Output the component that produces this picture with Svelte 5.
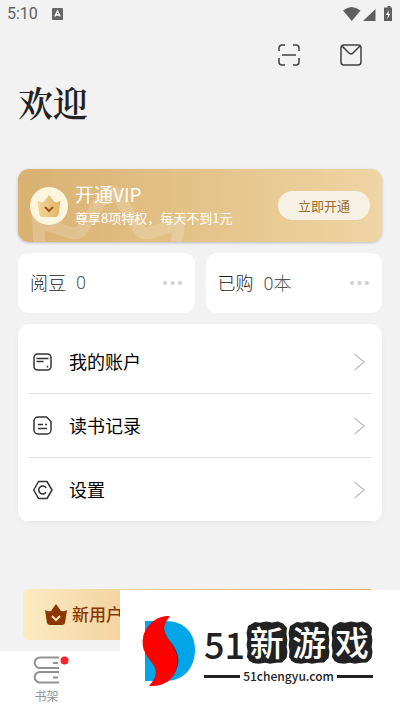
<script lang="ts">
	const stats = [
		{ label: '阅豆', value: '0' },
		{ label: '已购', value: '0本' }
	];

	const menu = [
		{ id: 'account', label: '我的账户' },
		{ id: 'history', label: '读书记录' },
		{ id: 'settings', label: '设置' }
	];
</script>

<div class="screen">
	<div class="status">
		<span class="time">5:10</span>
		<svg class="notice" width="11" height="12" viewBox="0 0 11 12">
			<rect width="11" height="12" rx="1" fill="#666" />
			<path d="M2.8 8.5 5.5 3l2.7 5.5M4 7h3" fill="none" stroke="#fff" stroke-width="1.4" />
		</svg>
		<svg class="signals" width="50" height="16" viewBox="0 0 50 16">
			<path d="M0 4.5Q8.500-2.500 17.500 4.500L8.800 15Z" fill="#5f5f5f" />
			<path d="M32.500 3v12H20Z" fill="#5f5f5f" />
			<path d="M43 1.500h1.500V0h3v1.500H49V15h-8V1.500Z" fill="#5f5f5f" />
			<path d="m46 4-3 5h2l-.7 4 3-5.200h-2Z" fill="#fff" />
		</svg>
	</div>

	<header>
		<div class="actions">
			<button aria-label="扫一扫">
				<svg width="22" height="22" viewBox="0 0 22 22" class="line">
					<path d="M1 7V4a3 3 0 0 1 3-3h3M15 1h3a3 3 0 0 1 3 3v3M21 14v4a3 3 0 0 1-3 3h-3M7 21H4a3 3 0 0 1-3-3v-4M4 11h14" />
				</svg>
			</button>
			<button aria-label="消息">
				<svg width="22" height="22" viewBox="0 0 22 22" class="line">
					<rect x="1" y="1" width="20" height="20" rx="3" />
					<path d="m2 2 7 7q2 2 4 0l7-7" />
				</svg>
			</button>
		</div>
		<h1>欢迎</h1>
	</header>

	<main>
		<section class="vip">
			<svg class="vip-bg" width="200" height="74" viewBox="0 0 200 74">
				<path d="M22 82 20 53l33 11q8 2 12-5l21-32q8-9 14 0l20 32q4 7 12 5l29-10-3 28" />
			</svg>
			<svg class="medal" width="38" height="38" viewBox="0 0 38 38">
				<defs>
					<linearGradient id="crown" x1="0" x2="1">
						<stop offset="0" stop-color="#f3d594" />
						<stop offset="1" stop-color="#e2b469" />
					</linearGradient>
				</defs>
				<circle cx="19" cy="19" r="19" fill="#fdf5de" />
				<path d="M7.500 13.500q3 2.500 6 1.500l5.500-7 5.500 7q3 1 6-1.500l-2 14q-.5 2.500-3 2.500h-13q-2.500 0-3-2.500Z" fill="url(#crown)" />
				<path d="m15 20 4 4 4-4" fill="none" stroke="#9b5b1c" stroke-width="2" />
			</svg>
			<div class="vip-text">
				<h2>开通VIP</h2>
				<p>尊享8项特权，每天不到1元</p>
			</div>
			<button class="open">立即开通</button>
		</section>

		<div class="stats">
			{#each stats as stat}
				<button class="stat">
					<span>{stat.label}</span>
					<span class="value">{stat.value}</span>
					<svg class="dots" width="20" height="4" viewBox="0 0 20 4">
						<circle cx="2" cy="2" r="2" />
						<circle cx="9.500" cy="2" r="2" />
						<circle cx="17" cy="2" r="2" />
					</svg>
				</button>
			{/each}
		</div>

		<nav class="menu">
			{#each menu as item}
				<button class="row">
					<svg class="icon" width="20" height="20" viewBox="0 0 20 20">
						{#if item.id === 'account'}
							<rect x="1" y="2" width="17" height="16" rx="3.500" />
							<path d="M3.500 6.500h12M3.500 9.500h7M14.500 13.700v1.800" />
						{:else if item.id === 'history'}
							<path d="M5 1h8.500L18 5.500V14a4 4 0 0 1-4 4H5a4 4 0 0 1-4-4V5a4 4 0 0 1 4-4Z" />
							<path d="M5 8.500h5M12 8.500h2M5 12.500h9" />
						{:else}
							<path d="M5.500 1.500h8.500l5 8.500-5 8.500H5.500L.7 10Z" stroke-linejoin="round" />
							<path d="M13.200 8A4 4 0 1 0 13 12.300" />
						{/if}
					</svg>
					<span>{item.label}</span>
					<svg class="chevron" width="12" height="18" viewBox="0 0 12 18">
						<path d="m1.500 1 9.500 8-9.500 8" />
					</svg>
				</button>
			{/each}
		</nav>
	</main>

	<button class="promo">
		<svg width="24" height="22" viewBox="0 0 24 22">
			<path d="M1 6q3 2 6 1l5-7 5 7q3 1 6-1l-2 13q-.5 2-3 2H6q-2.500 0-3-2Z" fill="#8c3602" />
			<path d="m8 12 4 4 4-4" fill="none" stroke="#fbe3b3" stroke-width="2" />
		</svg>
		<span>新用户</span>
	</button>

	<nav class="tabs">
		<a href="#shelf">
			<svg width="44" height="28" viewBox="-8 0 44 28">
				<path d="M26 1.500H7a5.300 5.300 0 0 0 0 10.600h19M26 16H7a5.300 5.300 0 0 0 0 10.600h19" fill="none" stroke="#919191" stroke-width="2" />
				<path d="M20 7h5M20 21.500h5" stroke="#919191" stroke-width="2" />
				<circle cx="31.500" cy="4.500" r="4" fill="#f8262c" />
			</svg>
			<span>书架</span>
		</a>
	</nav>

	<aside>
		<svg class="logo" width="54" height="74" viewBox="142 614 54 74">
			<path d="M145 621h21c18 0 29 12 29 29s-11 31-29 31h-21Z" fill="#00a6e7" />
			<path d="M165 619c-3 13 1 17 8 26 8 12 8 24-6 37h-6V619Z" fill="#063a80" />
			<path d="M170 616c-13-1-25 9-27 22-2 12 4 18 9 25 6 8 5 14-3 23 14 1 24-6 27-16 3-11 1-19-5-27-8-10-10-16-1-27Z" fill="#f00" />
		</svg>
		<div class="brand">
			<div class="name">
				<b>51</b>
				{#each ['新', '游', '戏'] as char}
					<span class="tile">
						<svg viewBox="0 0 42 43">
							<path d="M9 1l5 .7L20 .4l6 1L32 .6l5 1.800L41 7l-.6 6 1 6-.8 7 .9 5-1 6-4.500 4.500-6 .3-6 1-5-1-6 1-6-.8L3.500 40 1 36l.6-6-1-6 .8-6-.8-6L2 5Z" />
						</svg>
						<i>{char}</i>
					</span>
				{/each}
			</div>
			<div class="domain">51chengyu.com</div>
		</div>
	</aside>
</div>

<style>
	:global(body) {
		margin: 0;
	}

	.screen {
		position: relative;
		display: flex;
		flex-direction: column;
		min-height: 100vh;
		background: #f2f2f2;
		color: #1a1a1a;
		font-family: "Noto Sans CJK SC", sans-serif;
	}

	button {
		border: 0;
		padding: 0;
		background: none;
		color: inherit;
		font: inherit;
		cursor: pointer;
	}

	svg {
		display: block;
		flex: none;
	}

	h1, h2, p {
		margin: 0;
	}

	.status {
		display: flex;
		align-items: center;
		height: 28px;
		padding: 0 7px;
	}

	.time {
		color: #5f5f5f;
		font: 16px/20px Roboto, sans-serif;
	}

	.notice {
		margin-left: 14px;
	}

	.signals {
		margin-left: auto;
	}

	header {
		padding: 16px 18px 0;
	}

	.actions {
		display: flex;
		justify-content: flex-end;
		gap: 40px;
		padding-right: 20px;
	}

	.line {
		fill: none;
		stroke: #414141;
		stroke-width: 1.5;
	}

	h1 {
		margin-top: 11px;
		font: 600 35px/50px "Noto Serif CJK SC", "Noto Sans CJK SC", serif;
		color: #222;
	}

	main {
		display: flex;
		flex-direction: column;
		gap: 11px;
		padding: 42px 18px 0;
	}

	.vip {
		position: relative;
		display: flex;
		align-items: center;
		height: 73px;
		padding: 0 12px;
		border-radius: 11px;
		overflow: hidden;
		background: linear-gradient(90deg, #d9b171, #e5c58c 55%, #eed5a4);
		box-shadow: 0 1px 3px #b9bcc2;
	}

	.vip-bg {
		position: absolute;
		left: 0;
		top: 0;
		fill: none;
		stroke: rgba(255, 255, 255, 0.17);
		stroke-width: 12;
	}

	.medal {
		position: relative;
	}

	.vip-text {
		position: relative;
		flex: 1;
		margin-left: 7px;
		padding-bottom: 2px;
		color: #fff;
		white-space: nowrap;
	}

	h2 {
		font-size: 19px;
		font-weight: 400;
		line-height: 26px;
	}

	p {
		font-size: 13px;
		line-height: 22px;
	}

	.open {
		width: 92px;
		height: 29px;
		border-radius: 15px;
		background: #f6f1e4;
		color: #a16a2c;
		font-size: 13px;
	}

	.stats {
		display: flex;
		gap: 11px;
	}

	.stat {
		display: flex;
		flex: 1;
		align-items: center;
		gap: 10px;
		height: 60px;
		padding: 0 12px;
		border-radius: 11px;
		background: #fff;
		font-size: 18px;
		font-weight: 300;
	}

	.stat span {
		padding-bottom: 2px;
	}

	.value {
		color: #555;
		font-family: Roboto, "Noto Sans CJK SC", sans-serif;
	}

	.dots {
		margin-left: auto;
		fill: #d0d0d0;
	}

	.menu {
		padding: 6px 11px 0;
		border-radius: 11px;
		background: #fff;
		box-shadow: 0 1px 4px #e8e8e8;
	}

	.row {
		display: flex;
		align-items: center;
		box-sizing: border-box;
		width: 100%;
		height: 64px;
		padding: 0 6px 0 4px;
		border-bottom: 1px solid #e5e5e9;
		color: #000;
		font-size: 18px;
	}

	.row span {
		padding-bottom: 2px;
	}

	.icon {
		margin-right: 16px;
		fill: none;
		stroke: #333;
		stroke-width: 1.5;
	}

	.chevron {
		margin-left: auto;
		fill: none;
		stroke: #c5c5c5;
		stroke-width: 1.5;
	}

	.promo {
		display: flex;
		align-items: center;
		gap: 4px;
		height: 51px;
		margin: auto 26px 11px 23px;
		padding-left: 21px;
		border-radius: 5px;
		background: linear-gradient(90deg, #fdebc2, #efce98 35%, #dfa86c);
		color: #8c3602;
		font-size: 17px;
		font-weight: 500;
	}

	.promo span {
		padding-bottom: 2px;
	}

	.tabs {
		height: 59px;
		background: #fff;
	}

	.tabs a {
		display: flex;
		flex-direction: column;
		align-items: center;
		gap: 1px;
		width: 93px;
		padding-top: 5px;
		color: #919191;
		font-size: 12px;
		line-height: 22px;
		text-decoration: none;
	}

	/* watermark over the promo and the tab bar */
	aside {
		position: absolute;
		right: 0;
		bottom: 0;
		display: flex;
		align-items: center;
		gap: 8px;
		box-sizing: border-box;
		width: 280px;
		height: 120px;
		padding: 2px 27px 0 22px;
		background: #fff;
	}

	.brand {
		flex: 1;
		padding-top: 5px;
		color: #222;
	}

	.name {
		display: flex;
		align-items: center;
		justify-content: space-between;
	}

	b {
		font-size: 36px;
		font-weight: 500;
		line-height: 38px;
	}

	.tile {
		position: relative;
		width: 42px;
		height: 43px;
		color: #fff;
		font-size: 34px;
		font-weight: 500;
		line-height: 42px;
		text-align: center;
	}

	.tile svg {
		position: absolute;
		inset: 0;
		fill: #222;
	}

	.tile i {
		position: relative;
		font-style: normal;
	}

	.domain {
		display: flex;
		align-items: center;
		gap: 3px;
		margin-top: 2px;
		font-size: 12px;
		font-weight: 500;
		line-height: 20px;
	}

	.domain::before,
	.domain::after {
		content: "";
		flex: 1;
		height: 3px;
		background: #222;
	}
</style>
